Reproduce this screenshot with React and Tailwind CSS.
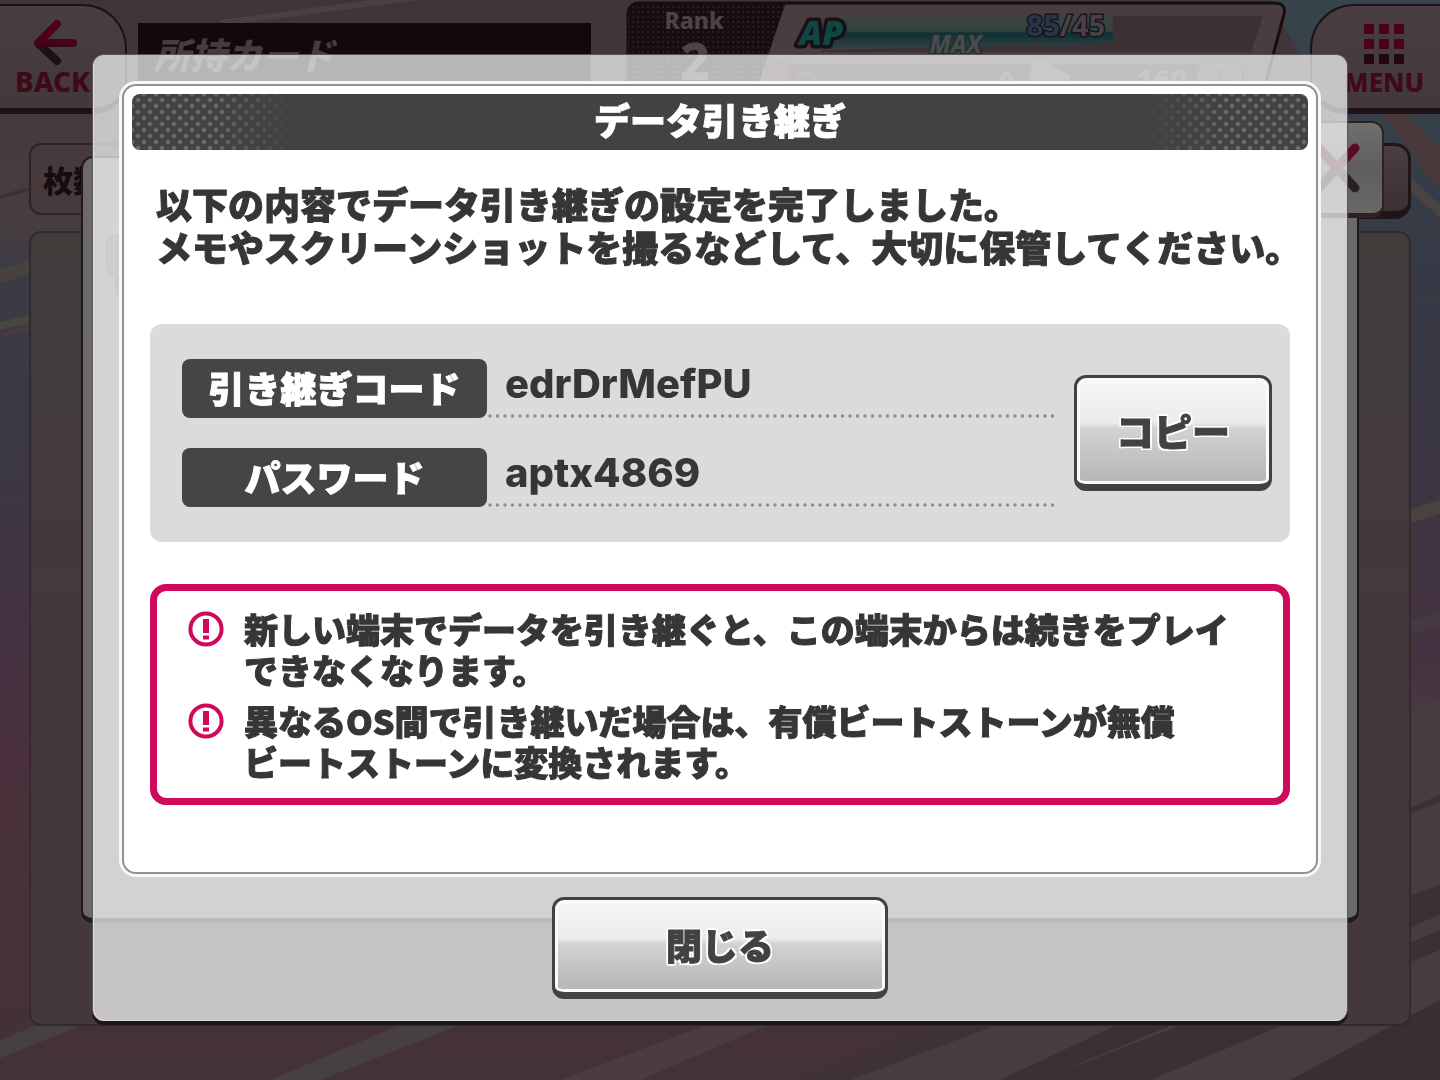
// src/App.jsx
const GLYPH_OUTLINE = "[text-shadow:2px_0_0_#fff,-2px_0_0_#fff,0_2px_0_#fff,0_-2px_0_#fff,2px_2px_0_#fff,-2px_2px_0_#fff,2px_-2px_0_#fff,-2px_-2px_0_#fff]";

const credentials = [
  { id: "code", label: "引き継ぎコード", value: "edrDrMefPU" },
  { id: "password", label: "パスワード", value: "aptx4869" },
];

const notices = [
  ["新しい端末でデータを引き継ぐと、この端末からは続きをプレイ", "できなくなります。"],
  ["異なるOS間で引き継いだ場合は、有償ビートストーンが無償", "ビートストーンに変換されます。"],
];

// Striped stage art behind every screen
const Backdrop = () => (
  <svg
    className="absolute inset-0 h-full w-full"
    viewBox="0 0 1440 1080"
    preserveAspectRatio="none"
    aria-hidden="true"
  >
    <defs>
      <linearGradient id="side" x1="0" y1="0" x2="0" y2="1">
        <stop offset="0" stopColor="#3f3539" />
        <stop offset="0.2" stopColor="#483d40" />
        <stop offset="0.25" stopColor="#3b3b45" />
        <stop offset="0.4" stopColor="#3a3944" />
        <stop offset="0.55" stopColor="#423244" />
        <stop offset="0.7" stopColor="#4a2f3c" />
        <stop offset="0.85" stopColor="#473136" />
        <stop offset="1" stopColor="#433237" />
      </linearGradient>
      <linearGradient id="rightSide" x1="0" y1="0" x2="0" y2="1">
        <stop offset="0" stopColor="#37444a" />
        <stop offset="0.35" stopColor="#363a46" />
        <stop offset="0.65" stopColor="#3d3543" />
        <stop offset="0.85" stopColor="#443240" />
        <stop offset="1" stopColor="#483b40" />
      </linearGradient>
    </defs>
    <rect width="1440" height="1080" fill="url(#side)" />
    <path d="M1270 0H1440V720L1340 750V130Z" fill="url(#rightSide)" />
    <path d="M1400 110L1440 150V190L1380 110Z" fill="#49393b" />
    <path d="M1340 110L1440 205V218L1325 110Z" fill="#4a4443" />
    <path d="M1340 530L1440 500V514L1340 545Z" fill="#494240" />
    <path d="M1340 640L1440 612V626L1340 654Z" fill="#453a42" />
    <path d="M220 26L420 0H372L220 20Z" fill="#4a4043" />
    <path d="M0 195L90 170V174L0 199Z" fill="#3b3236" />
    <path d="M0 270L90 238V252L0 284Z" fill="#48413f" />
    <path d="M0 322L90 300V308L0 330Z" fill="#4b4540" />
    <path d="M0 333L90 313V318L0 338Z" fill="#4a3a40" />
    <path d="M1340 725L1440 700V1080H840L1100 980Z" fill="#493c40" />
    <path d="M1340 838L1440 795V802L1340 842Z" fill="#3d3036" />
    <path d="M1340 920L1440 885V950L1120 1080H1000Z" fill="#3c3034" />
    <path d="M1340 955L1440 915V930L1090 1080H1040Z" fill="#483c40" />
    <path d="M1440 1000V1080H1290Z" fill="#3a2e32" />
    <path d="M1040 1080L1220 1010H1320L1150 1080Z" fill="#3c3034" />
    <path d="M0 1040L100 1000V1018L0 1058Z" fill="#474041" />
    <path d="M270 1080L400 1025H460L320 1080Z" fill="#474041" />
    <path d="M560 1080L720 1020H780L640 1080Z" fill="#4a3c41" />
    <path d="M800 1080L950 1020H1010L850 1080Z" fill="#3f3236" />
  </svg>
);

const BackIcon = () => (
  <svg className="h-[47px] w-[46px]" viewBox="0 0 46 47" aria-hidden="true">
    <defs>
      <linearGradient id="backInk" x1="0" y1="0" x2="0" y2="47" gradientUnits="userSpaceOnUse">
        <stop offset="0" stopColor="#4f0017" />
        <stop offset="0.55" stopColor="#4f0017" />
        <stop offset="0.75" stopColor="#1b1114" />
      </linearGradient>
    </defs>
    <path
      d="M25 8L6 27L25 45M6 27H41"
      transform="translate(1 -2)"
      fill="none"
      stroke="url(#backInk)"
      strokeWidth="8"
      strokeLinecap="round"
      strokeLinejoin="round"
    />
  </svg>
);

const MenuIcon = () => (
  <svg className="h-[40px] w-[40px]" viewBox="0 0 40 40" aria-hidden="true">
    {[0, 15, 30].map((y) =>
      [0, 15, 30].map((x) => (
        <rect key={`${x}-${y}`} x={x} y={y} width="10" height="10" rx="1" fill={y === 30 ? "#25070f" : "#4d0018"} />
      ))
    )}
  </svg>
);

// Rank plate, AP gauge and currency row
const StatusBar = () => (
  <svg className="h-[110px] min-w-0 flex-1" viewBox="0 0 660 110" preserveAspectRatio="none">
    <defs>
      <linearGradient id="gauge" x1="0" y1="0" x2="0" y2="1">
        <stop offset="0" stopColor="#3f4340" />
        <stop offset="0.45" stopColor="#2f4241" />
        <stop offset="0.5" stopColor="#0c3134" />
        <stop offset="1" stopColor="#3a4042" />
      </linearGradient>
      <pattern id="rankDots" width="5" height="5" patternUnits="userSpaceOnUse">
        <rect width="5" height="5" fill="#170c10" />
        <circle cx="2" cy="2" r="1" fill="#30252a" />
      </pattern>
    </defs>
    <path d="M14 3H646Q660 3 657 14L632 108H14Q2 108 2 94V15Q2 3 14 3Z" fill="#493d41" stroke="#190d11" strokeWidth="3" />
    <path d="M12 4H159L125 106H12Q2 106 2 94V14Q2 4 12 4Z" fill="url(#rankDots)" />
    <path d="M205 16H636L624 52H195Z" fill="#3b3034" />
    <path d="M205 16H486V44L196 50Z" fill="url(#gauge)" />
    <path d="M160 64H612L602 100H150Z" fill="#34292d" />
    <g fontFamily="'Noto Sans', sans-serif" fontWeight="800">
      <text x="68" y="29" textAnchor="middle" fontSize="23" fill="#4c4446">Rank</text>
      <text x="69" y="80" textAnchor="middle" fontSize="51" fill="#4c4446">2</text>
      <text x="173" y="45" fontSize="34" fontWeight="900" fontStyle="italic" fill="#0d4842" stroke="#1a0f13" strokeWidth="7" strokeLinejoin="round" paintOrder="stroke">AP</text>
      <text x="303" y="53" fontSize="24" fontStyle="italic" fill="#4a4a4b" stroke="#1d3035" strokeWidth="3" paintOrder="stroke">MAX</text>
      <text x="400" y="36" fontSize="29" fontWeight="700" fill="#2b3448" stroke="#16141f" strokeWidth="3" paintOrder="stroke">
        85<tspan fill="#4a4144">/45</tspan>
      </text>
      <text x="373" y="90" fontSize="24" fill="#50474a">0</text>
      <text x="510" y="90" fontSize="29" fill="#50474a">160</text>
    </g>
    <circle cx="151" cy="71" r="12" fill="#4d3336" />
    <circle cx="180" cy="82" r="9" fill="none" stroke="#3f3437" strokeWidth="4" />
    <path d="M406 62L424 60L430 90L400 92Z" fill="#444b4d" />
    <path d="M426 66L444 76L438 92L424 84Z" fill="#504b38" />
    <rect x="570" y="62" width="46" height="42" rx="12" fill="#4d4346" stroke="#3b3134" strokeWidth="2" />
    <path d="M593 70V96M580 83H606" stroke="#3d3336" strokeWidth="6" />
  </svg>
);

const GameScreen = () => (
  <div className="absolute inset-0 flex flex-col overflow-hidden">
    <Backdrop />

    <header className="relative flex items-start">
      <button
        type="button"
        className="mt-1 flex h-[110px] w-[127px] shrink-0 flex-col items-start rounded-tr-[44px] rounded-br-[34px] border-2 border-b-[6px] border-l-0 border-[#1d1215] bg-gradient-to-b from-[#483d40] to-[#43383b] pl-[15px] pt-3"
      >
        <span className="pl-4">
          <BackIcon />
        </span>
        <span className="font-['Noto_Sans',sans-serif] text-[28px] font-extrabold leading-[32px] text-[#3f0a18]">
          BACK
        </span>
      </button>
      <h1 className="ml-[11px] mt-[23px] h-[59px] w-[453px] shrink-0 bg-[#15080c] pl-4 pt-1 text-[36px] font-black italic leading-[52px] text-[#453c3f]">
        所持カード
      </h1>
      <div className="ml-[35px] flex min-w-0 flex-1">
        <StatusBar />
      </div>
      <button
        type="button"
        className="ml-[23px] mt-1 flex h-[110px] w-[130px] shrink-0 flex-col items-center rounded-tl-[44px] rounded-bl-[34px] border-2 border-b-[6px] border-r-0 border-[#1d1215] bg-gradient-to-b from-[#483d40] to-[#43383b] pl-4 pt-[18px]"
      >
        <MenuIcon />
        <span className="mt-1 font-['Noto_Sans',sans-serif] text-[26px] font-extrabold leading-[28px] text-[#3f0a18]">
          MENU
        </span>
      </button>
    </header>

    <div className="relative mx-[29px] mt-[29px] flex justify-between">
      <div className="h-[72px] w-[280px] rounded-xl border-2 border-[#2e2326] bg-[#463a3d] pl-3 text-[30px] font-black leading-[68px] text-[#170c0f]">
        枚数
      </div>
      <div className="h-[76px] w-[200px] rounded-2xl border-[3px] border-b-8 border-[#1f1517] bg-gradient-to-b from-[#4a3e41] to-[#3c3034]" />
    </div>
    <div className="relative mx-[29px] mb-[54px] mt-3 flex-1 rounded-xl border-2 border-[#33282b] bg-gradient-to-b from-[#403d3b] via-[#44383b] to-[#45383b]" />

    {/* Card detail window that was open before the transfer dialog */}
    <div className="absolute inset-x-[81px] bottom-[157px] top-[156px] rounded-xl border-2 border-b-[5px] border-[#221719] bg-[#6a6a69]">
      <svg className="ml-5 mt-[50px] h-[92px] w-[40px]" viewBox="0 0 40 92" aria-hidden="true">
        <path d="M12 12L22 2L40 8V26H6Z" fill="#747474" />
        <path d="M4 34Q4 28 10 28H40V88H18Q13 88 13 80V66H8Q4 66 4 60Z" fill="#5c6040" stroke="#50504a" strokeWidth="2" />
      </svg>
    </div>
    <button
      type="button"
      aria-label="閉じる"
      className="absolute right-[56px] top-[121px] flex h-[97px] w-[94px] items-center justify-center rounded-xl border-2 border-b-[5px] border-[#2b2223] bg-gradient-to-b from-[#716f6d] via-[#605e5d] to-[#6a6867]"
    >
      <svg className="h-[50px] w-[50px]" viewBox="0 0 50 50" aria-hidden="true">
        <path d="M7 5L43 45M7 45L25 25" stroke="#262122" strokeWidth="9" strokeLinecap="round" />
        <path d="M7 5L25 25L43 5" fill="none" stroke="#590a22" strokeWidth="9" strokeLinecap="round" />
      </svg>
    </button>
  </div>
);

const GlossButton = ({ children, className }) => (
  <button
    type="button"
    className={`rounded-xl border-[3px] border-b-[7px] border-[#424242] bg-[linear-gradient(to_bottom,#f8f8f8,#ebebeb_42%,#d2d2d2_48%,#b5b5b5)] pb-1 font-black text-[#424242] shadow-[inset_0_0_0_3px_#fafafa] [-webkit-text-stroke:1px_currentColor] ${GLYPH_OUTLINE} ${className}`}
  >
    {children}
  </button>
);

const Halftone = ({ className }) => (
  <span
    className={`absolute inset-y-0 w-[160px] bg-[radial-gradient(circle,#747474_1px,transparent_3px),radial-gradient(circle,#747474_1px,transparent_3px)] bg-[length:12px_12px] bg-[position:0_0,6px_6px] ${className}`}
  />
);

const AlertIcon = () => (
  <svg className="mt-[3px] h-[36px] w-[36px] shrink-0" viewBox="0 0 36 36" aria-hidden="true">
    <circle cx="18" cy="18" r="15.6" fill="none" stroke="#cf0a5c" strokeWidth="4" />
    <path d="M15 8H21V22H15ZM15 24.5H21V28.5H15Z" fill="#cf0a5c" />
  </svg>
);

const DottedLine = () => (
  <svg className="block h-[4px] w-full" aria-hidden="true">
    <line x1="3" y1="2" x2="100%" y2="2" stroke="#8c8c8c" strokeWidth="3.4" strokeLinecap="round" strokeDasharray="0 7.5" />
  </svg>
);

const TransferDialog = () => (
  <section
    role="dialog"
    aria-modal="true"
    aria-labelledby="dialog-title"
    className="relative mx-[92px] mb-[54px] mt-[54px] flex flex-col items-center rounded-xl border border-b-0 border-[#595555] bg-white/70 px-[29px] pb-[22px] pt-[29px] shadow-[0_4px_0_#1d1718,inset_1px_-1px_0_#dcdcdc] backdrop-saturate-50"
  >
    <div className="w-full rounded-[14px] border-2 border-[#929292] bg-white px-2 pb-[67px] pt-2 shadow-[0_0_0_3px_#f8f8f8]">
      <h2
        id="dialog-title"
        className="relative h-[56px] overflow-hidden rounded-lg bg-[#424242] text-center text-[36px] font-black leading-[50px] text-white [-webkit-text-stroke:1px_currentColor]"
      >
        <Halftone className="left-0 mask-[linear-gradient(to_right,black_50%,transparent)]" />
        データ引き継ぎ
        <Halftone className="right-0 mask-[linear-gradient(to_left,black_50%,transparent)]" />
      </h2>

      <p className="pl-6 pt-8 text-[36px] font-black leading-[43px] [-webkit-text-stroke:1px_currentColor]">
        以下の内容でデータ引き継ぎの設定を完了しました。
        <br />
        メモやスクリーンショットを撮るなどして、大切に保管してください。
      </p>

      <div className="mx-[18px] mt-14 flex items-center gap-[20px] rounded-xl bg-[#dbdbdb] py-[35px] pl-8 pr-[18px]">
        <dl className="flex flex-1 flex-col gap-[30px]">
          {credentials.map((item) => (
            <div key={item.id} className="flex h-[59px]">
              <dt className="w-[305px] shrink-0 rounded-lg bg-[#454545] text-center text-[36px] font-black leading-[57px] text-white [-webkit-text-stroke:1px_currentColor]">
                {item.label}
              </dt>
              <dd className="flex flex-1 flex-col justify-between">
                <span className="pl-[18px] font-['Inter',sans-serif] text-[40px] font-extrabold leading-[50px]">
                  {item.value}
                </span>
                <DottedLine />
              </dd>
            </div>
          ))}
        </dl>
        <GlossButton className="h-[116px] w-[198px] text-[38px]">コピー</GlossButton>
      </div>

      <ul className="mx-[18px] mt-[42px] flex flex-col gap-[10px] rounded-2xl border-[7px] border-[#cf0a5c] pb-4 pl-[31px] pt-[17px]">
        {notices.map((lines) => (
          <li
            key={lines[0]}
            className="flex gap-5 text-[34px] font-black leading-[41px] [-webkit-text-stroke:1px_currentColor]"
          >
            <AlertIcon />
            <p>
              {lines[0]}
              <br />
              {lines[1]}
            </p>
          </li>
        ))}
      </ul>
    </div>

    <GlossButton className="mt-[23px] h-[102px] w-[336px] text-[36px]">閉じる</GlossButton>
  </section>
);

const App = () => {
  return (
    <div
      lang="ja"
      className="relative flow-root min-h-screen overflow-hidden bg-[#45383b] font-['Noto_Sans_CJK_JP',sans-serif] text-[#363636]"
    >
      <GameScreen />
      <TransferDialog />
    </div>
  );
};

export default App;
